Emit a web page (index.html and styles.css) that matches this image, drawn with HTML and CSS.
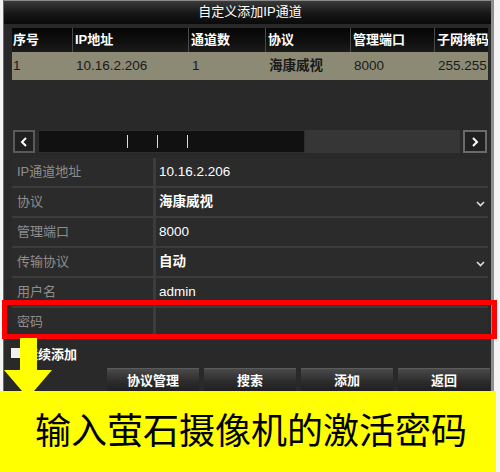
FILE: index.html
```html
<!DOCTYPE html>
<html lang="zh">
<head>
<meta charset="utf-8">
<title>自定义添加IP通道</title>
<link rel="stylesheet" href="styles.css">
</head>
<body>
<div class="page">
  <div class="panel">
    <div class="titlebar">自定义添加IP通道</div>
    <div class="table">
      <div class="thead">
        <div class="th">序号</div>
        <div class="th">IP地址</div>
        <div class="th">通道数</div>
        <div class="th">协议</div>
        <div class="th">管理端口</div>
        <div class="th">子网掩码</div>
      </div>
      <div class="trow">
        <div class="td">1</div>
        <div class="td">10.16.2.206</div>
        <div class="td">1</div>
        <div class="td strong">海康威视</div>
        <div class="td">8000</div>
        <div class="td">255.255</div>
      </div>
      <div class="tempty"></div>
    </div>
    <div class="scrollbar">
      <div class="sbtn"><svg width="8" height="10" viewBox="0 0 8 10"><path d="M6 1 L2 5 L6 9" fill="none" stroke="#fff" stroke-width="2"/></svg></div>
      <div class="thumb"><span class="tick"></span><span class="tick"></span><span class="tick"></span></div>
      <div class="trough"></div>
      <div class="sbtn right"><svg width="8" height="10" viewBox="0 0 8 10"><path d="M2 1 L6 5 L2 9" fill="none" stroke="#fff" stroke-width="2"/></svg></div>
    </div>
    <div class="form">
      <div class="frow"><div class="flabel">IP通道地址</div><div class="fval">10.16.2.206</div></div>
      <div class="frow"><div class="flabel">协议</div><div class="fval"><span class="strong">海康威视</span><svg class="chev" width="9" height="6" viewBox="0 0 9 6"><path d="M1 1 L4.5 4.5 L8 1" fill="none" stroke="#ddd" stroke-width="1.6"/></svg></div></div>
      <div class="frow"><div class="flabel">管理端口</div><div class="fval">8000</div></div>
      <div class="frow"><div class="flabel">传输协议</div><div class="fval"><span class="strong">自动</span><svg class="chev" width="9" height="6" viewBox="0 0 9 6"><path d="M1 1 L4.5 4.5 L8 1" fill="none" stroke="#ddd" stroke-width="1.6"/></svg></div></div>
      <div class="frow"><div class="flabel">用户名</div><div class="fval">admin</div></div>
      <div class="frow"><div class="flabel">密码</div><div class="fval"></div></div>
    </div>
    <div class="checkrow"><span class="checkbox"></span><span class="checktext">继续添加</span></div>
    <div class="buttons">
      <div class="btn">协议管理</div>
      <div class="btn">搜索</div>
      <div class="btn">添加</div>
      <div class="btn">返回</div>
    </div>
  </div>
  <div class="banner">输入萤石摄像机的激活密码</div>
  <div class="redbox"></div>
  <svg class="arrow" width="56" height="64" viewBox="0 0 56 64"><polygon points="20,0 37,0 37,32 52,32 28,60 4,32 20,32" fill="#ffff00"/></svg>
</div>
</body>
</html>
```

FILE: styles.css
```css
* { box-sizing: border-box; }
html, body { margin: 0; padding: 0; }
body {
  font-family: "Liberation Sans", "Noto Sans CJK SC", sans-serif;
  font-size: 13px;
  background: #f4f4f4;
}
.page {
  position: relative;
  width: 500px;
  height: 472px;
  overflow: hidden;
  background: #f4f4f4;
  display: flex;
  flex-direction: column;
}
.panel {
  margin-left: 3px;
  width: 491px;
  height: 391px;
  background: #292929;
  border-left: 1px solid #6a6a6a;
  border-right: 3px solid #8e8e8e;
  display: flex;
  flex-direction: column;
  flex: none;
}
.titlebar {
  height: 24px;
  margin-bottom: 4px;
  background: linear-gradient(#3a3a3a, #161616 55%, #0a0a0a);
  border-top: 1px solid #8a8a8a;
  color: #fff;
  text-align: center;
  line-height: 22px;
  padding-left: 5px;
}
.table {
  margin-left: 8px;
  width: 476px;
  overflow: hidden;
}
.thead, .trow {
  display: grid;
  grid-template-columns: 60px 116px 77px 85px 84px 54px;
  white-space: nowrap;
}
.thead {
  height: 24px;
  background: linear-gradient(#060606, #101010 60%, #1c1c1c);
}
.th {
  color: #fff;
  font-weight: 700;
  line-height: 24px;
  padding-left: 2px;
  overflow: hidden;
  border-left: 1px solid #4a4a4a;
}
.th:first-child { border-left: none; padding-left: 1px; }
.trow {
  height: 28px;
  background: #8c8a74;
}
.td {
  color: #1a1a1a;
  line-height: 28px;
  padding-left: 4px;
  overflow: hidden;
  font-size: 13.5px;
}
.td:first-child { padding-left: 1px; }
.strong { font-weight: 700; }
.tempty { height: 50px; }
.scrollbar {
  margin-left: 9px;
  width: 474px;
  height: 23px;
  display: flex;
  gap: 3px;
}
.sbtn {
  width: 22px;
  height: 23px;
  border: 2px solid #5a5a5a;
  background: #202020;
  display: flex;
  align-items: center;
  justify-content: center;
}
.sbtn.right { width: 24px; border-color: #6a6a6a; }
.thumb {
  width: 267px;
  background: #111;
  border: 1px solid #2e2e2e;
  display: flex;
  align-items: center;
  gap: 29px;
  padding-left: 88px;
}
.tick {
  width: 1px;
  height: 13px;
  background: #ddd;
}
.trough {
  flex: 1;
  margin-left: -3px;
  background: #363636;
}
.form {
  margin-top: 5px;
  margin-left: 8px;
  width: 476px;
  display: flex;
  flex-direction: column;
  gap: 2px;
  background: #3c3c3c;
  height: 180px;
}
.frow {
  height: 28px;
  display: grid;
  grid-template-columns: 141px 1fr;
  column-gap: 3px;
}
.flabel, .fval {
  background: #2b2b2b;
  line-height: 28px;
  white-space: nowrap;
}
.flabel {
  color: #8e8e8e;
  padding-left: 5px;
}
.fval {
  color: #fff;
  padding-left: 3px;
  padding-right: 3px;
  display: flex;
  align-items: center;
  justify-content: space-between;
  font-size: 13.5px;
}
.chev { margin-top: 4px; }
.checkrow {
  height: 30px;
  margin-left: 7px;
  display: flex;
  align-items: center;
  gap: 4px;
}
.checkbox {
  width: 10px;
  height: 10px;
  background: #f0f0f0;
}
.checktext {
  color: #fff;
  font-weight: 700;
}
.buttons {
  height: 23px;
  display: flex;
  justify-content: flex-end;
  gap: 5px;
  margin-right: 1px;
}
.btn {
  width: 92px;
  height: 26px;
  background: linear-gradient(#4a4a4a, #2c2c2c 50%, #1c1c1c);
  border-top: 1px solid #5c5c5c;
  color: #fff;
  font-weight: 700;
  text-align: center;
  line-height: 24px;
}
.banner {
  width: 496px;
  height: 81px;
  background: #ffff00;
  color: #000;
  font-family: "Noto Sans CJK SC", sans-serif;
  font-size: 36px;
  line-height: 36px;
  padding-top: 19px;
  padding-left: 35px;
  white-space: nowrap;
  flex: none;
}
.redbox {
  position: absolute;
  left: 2px;
  top: 300px;
  width: 495px;
  height: 39px;
  border: 5px solid #ff0000;
}
.arrow {
  position: absolute;
  left: 0;
  top: 338px;
}
```
